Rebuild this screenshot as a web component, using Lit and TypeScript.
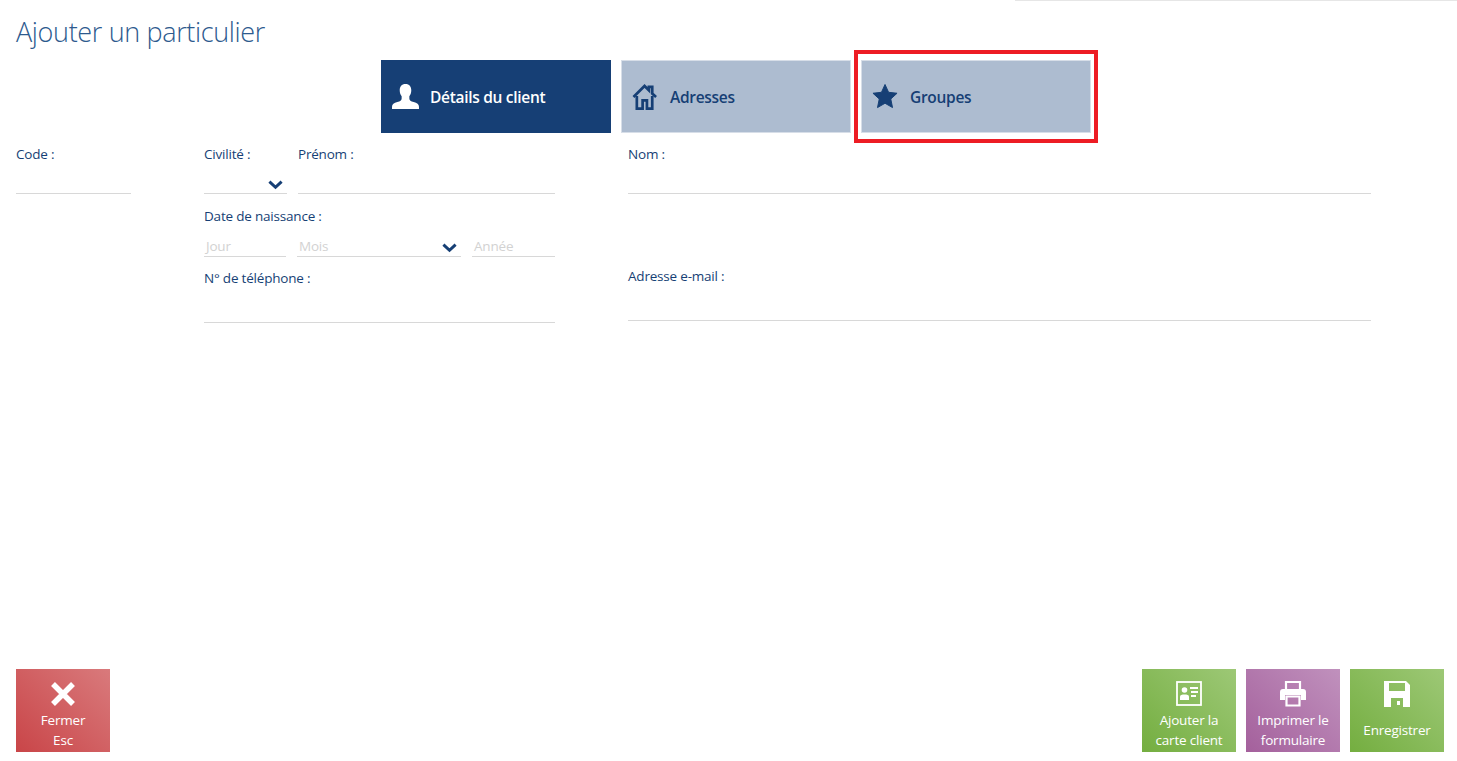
import { LitElement, html, css, svg } from "lit";
import { customElement } from "lit/decorators.js";

const chevron = html`<svg class="chev" viewBox="0 0 16 11"><path d="M1.5 2.5 8 8.5l6.5-6" fill="none" stroke="#163f75" stroke-width="3.2"/></svg>`;

const icons = {
  user: svg`<path d="M14 0c-4 0-6 2.800-6 6.500 0 2.600.8 4.700 2 6.200v2.300C10 17 8.500 17.800 5.500 18.800 2 20 0 21 0 23.500V26h28v-2.500c0-2.500-2-3.500-5.500-4.700-3-1-4.500-1.800-4.500-3.800v-2.300c1.200-1.500 2-3.600 2-6.200C20 2.800 18 0 14 0z" fill="#fff"/>`,
  home: svg`<path d="M1.500 13.500 13 2l4.500 4.500V3h3.500v7l4 3.500" fill="none" stroke="#163f75" stroke-width="2.800"/><path d="M5 12.500V25.500h6V17h4.500v8.500H21V12.500" fill="none" stroke="#163f75" stroke-width="2.800"/>`,
  star: svg`<path d="M13.500 0.500l3.700 8.100 8.800 1-6.500 6 1.800 8.900-7.800-4.500-7.800 4.500 1.800-8.900L1 9.600l8.800-1z" fill="#163f75" stroke="#163f75" stroke-width="1" stroke-linejoin="round"/>`,
  close: svg`<path d="M3 3l20 20M23 3 3 23" stroke="#fff" stroke-width="5.500" fill="none"/>`,
  card: svg`<rect x="1" y="1" width="24" height="23" fill="none" stroke="#fff" stroke-width="1.800"/><circle cx="8.500" cy="9" r="2.800" fill="#fff"/><path d="M4 19v-3.500c0-1.500 2-2 4.500-2s4.500.5 4.500 2V19z" fill="#fff"/><path d="M14 7h8M15 11h7M15 15h5" stroke="#fff" stroke-width="1.800"/>`,
  print: svg`<path d="M6 8V1h14v7" fill="none" stroke="#fff" stroke-width="2.200"/><path d="M3 8h20a3 3 0 0 1 3 3v8h-5v-5H5v5H0v-8a3 3 0 0 1 3-3z" fill="#fff"/><path d="M6.500 15.500h13V24.500h-13z" fill="none" stroke="#fff" stroke-width="2.200"/>`,
  save: svg`<path fill-rule="evenodd" d="M0 0h22l4 4v22H0zM5 2v8h16V2zM7 17v9h12v-9zM13 20h3v4h-3z" fill="#fff"/>`,
};

@customElement("app-root")
export class AppRoot extends LitElement {
  static styles = css`
    :host { display: flex; flex-direction: column; height: 761px; background: #fff; font-family: "Open Sans", "Noto Sans", sans-serif; color: #163f75; overflow: hidden; }
    .topline { height: 1px; margin-left: 1015px; background: #e6e6e6; }
    h1 { margin: 0; height: 59px; padding: 11px 0 0 16px; box-sizing: border-box; font-size: 27px; line-height: 40px; font-weight: 300; color: #2d5a8e; letter-spacing: -0.35px; }
    .tabs { display: flex; gap: 10px; padding-left: 381px; }
    .tab { position: relative; width: 230px; height: 73px; box-sizing: border-box; display: flex; align-items: center; gap: 11px; padding-left: 10px; background: #adbcd0; color: #163f75; font-size: 15.500px; font-weight: 600; letter-spacing: -0.3px; border: 1px solid #d7dee8; }
    .tab.active { background: #163f75; color: #fff; border-color: #163f75; }
    .tab svg { width: 27px; height: 26px; flex: none; }
    .mark { position: absolute; left: -8px; right: -8px; top: -11px; bottom: -11px; border: 4px solid #ed1c24; pointer-events: none; }
    .form { display: flex; padding: 11px 0 0 16px; font-size: 13.500px; letter-spacing: -0.2px; }
    .c1 { width: 115px; margin-right: 73px; }
    .c2 { width: 351px; margin-right: 73px; }
    .c3 { width: 743px; }
    .row { display: flex; gap: 11px; }
    .field { flex: 1; min-width: 0; }
    .lbl { height: 20px; line-height: 20px; }
    .line { position: relative; height: 29px; border-bottom: 1px solid #d8d8d8; box-sizing: content-box; }
    .chev { position: absolute; right: 4px; bottom: 3px; width: 15px; height: 11px; }
    .gap { height: 12px; }
    .ph { height: 19px; margin-top: 11px; line-height: 19px; border-bottom: 1px solid #d8d8d8; color: #d2d2d2; font-size: 13.500px; padding-left: 2px; position: relative; }
    .ph .chev { right: 4px; bottom: 3px; }
    .tall { height: 34px; margin-top: 0; border-bottom: 1px solid #d8d8d8; }
    .footer { margin-top: auto; display: flex; justify-content: space-between; padding: 0 13px 9px 16px; }
    .group { display: flex; gap: 10px; }
    .btn { width: 94px; height: 83px; box-sizing: border-box; display: flex; flex-direction: column; align-items: center; color: #fff; font-size: 13.500px; line-height: 20px; text-align: center; letter-spacing: -0.2px; padding-top: 12px; }
    .btn svg { width: 26px; height: 26px; flex: none; margin-bottom: 3px; }
    .btn span { display: block; white-space: nowrap; }
    .single { flex: 1; display: flex; align-items: center; margin-top: -2px; }
    .red { background: linear-gradient(45deg, #c94548, #d97a7c); }
    .green { background: linear-gradient(45deg, #74ae40, #9dc876); }
    .purple { background: linear-gradient(45deg, #a4609c, #c091bd); }
  `;

  private tab(label: string, icon: unknown, active = false, marked = false) {
    return html`<div class="tab ${active ? "active" : ""}">
      <svg viewBox="0 0 28 27">${icon}</svg>${label}
      ${marked ? html`<div class="mark"></div>` : ""}
    </div>`;
  }

  private btn(cls: string, icon: unknown, lines: string[]) {
    return html`<div class="btn ${cls}">
      <svg viewBox="0 0 26 26">${icon}</svg>
      ${lines.length === 1
        ? html`<div class="single"><span>${lines[0]}</span></div>`
        : lines.map((l) => html`<span>${l}</span>`)}
    </div>`;
  }

  render() {
    return html`
      <div class="topline"></div>
      <h1>Ajouter un particulier</h1>
      <div class="tabs">
        ${this.tab("Détails du client", icons.user, true)}
        ${this.tab("Adresses", icons.home)}
        ${this.tab("Groupes", icons.star, false, true)}
      </div>
      <div class="form">
        <div class="c1">
          <div class="lbl">Code :</div>
          <div class="line"></div>
        </div>
        <div class="c2">
          <div class="row">
            <div class="field" style="flex:0 0 83px">
              <div class="lbl">Civilité :</div>
              <div class="line">${chevron}</div>
            </div>
            <div class="field">
              <div class="lbl">Prénom :</div>
              <div class="line"></div>
            </div>
          </div>
          <div class="gap"></div>
          <div class="lbl">Date de naissance :</div>
          <div class="row">
            <div class="field" style="flex:0 0 82px"><div class="ph">Jour</div></div>
            <div class="field" style="flex:0 0 164px"><div class="ph">Mois${chevron}</div></div>
            <div class="field"><div class="ph">Année</div></div>
          </div>
          <div class="gap" style="height:11px"></div>
          <div class="lbl">N° de téléphone :</div>
          <div class="line" style="height:34px"></div>
        </div>
        <div class="c3">
          <div class="lbl">Nom :</div>
          <div class="line"></div>
          <div class="gap" style="height:72px"></div>
          <div class="lbl">Adresse e-mail :</div>
          <div class="line" style="height:34px"></div>
        </div>
      </div>
      <div class="footer">
        <div class="group">${this.btn("red", icons.close, ["Fermer", "Esc"])}</div>
        <div class="group">
          ${this.btn("green", icons.card, ["Ajouter la", "carte client"])}
          ${this.btn("purple", icons.print, ["Imprimer le", "formulaire"])}
          ${this.btn("green", icons.save, ["Enregistrer"])}
        </div>
      </div>
    `;
  }
}
